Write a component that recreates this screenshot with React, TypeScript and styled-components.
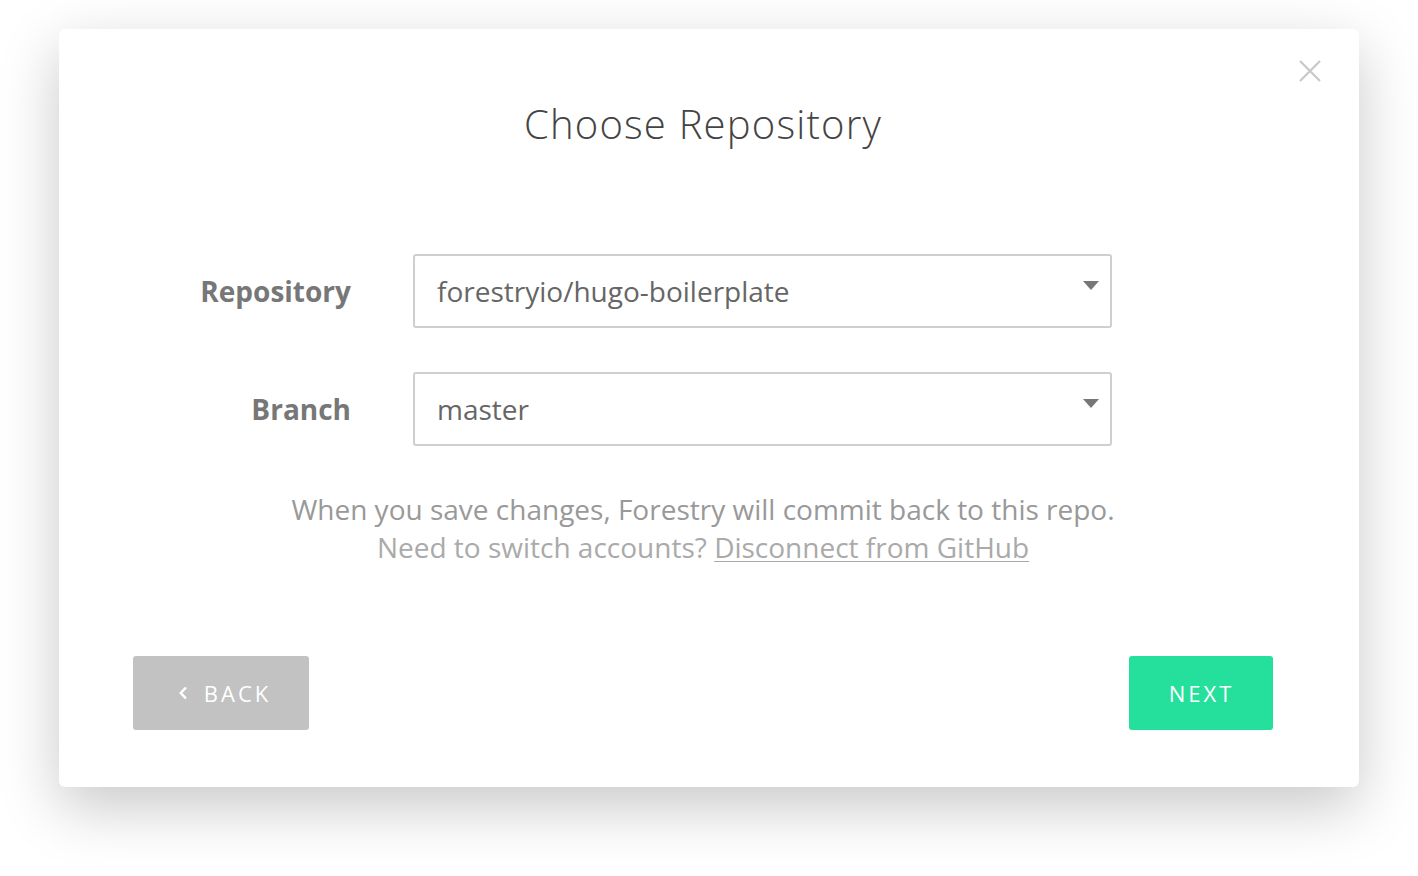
import React from "react";
import styled, { createGlobalStyle } from "styled-components";

const Global = createGlobalStyle`
  html, body { margin: 0; padding: 0; background: #fff; }
  body { font-family: "Open Sans", "Liberation Sans", sans-serif; }
  * { box-sizing: border-box; }
`;

const Page = styled.div`
  width: 1418px;
  height: 876px;
  padding: 29px 0 0 59px;
  overflow: hidden;
`;

const Modal = styled.div`
  position: relative;
  width: 1300px;
  height: 758px;
  background: #fff;
  border-radius: 6px;
  box-shadow: 0 20px 60px rgba(0, 0, 0, 0.22);
  padding: 72px 86px 57px 74px;
  display: flex;
  flex-direction: column;
`;

const Close = styled.button`
  position: absolute;
  top: 29px;
  right: 36px;
  width: 26px;
  height: 26px;
  padding: 0;
  border: 0;
  background: none;
  cursor: pointer;
  display: flex;
  align-items: center;
  justify-content: center;
`;

const Title = styled.h1`
  margin: 0;
  text-align: center;
  font-family: "Open Sans", sans-serif;
  font-weight: 300;
  font-size: 40px;
  line-height: 46px;
  letter-spacing: 1.2px;
  color: #444;
`;

const Form = styled.div`
  margin-top: 107px;
  display: grid;
  grid-template-columns: 218px 699px;
  column-gap: 62px;
  row-gap: 44px;
  align-items: center;
`;

const Label = styled.label`
  text-align: right;
  font-weight: 700;
  font-size: 28px;
  color: #777;
`;

const SelectBox = styled.div`
  position: relative;
  height: 74px;
  border: 2px solid #cfcfcf;
  border-radius: 3px;
  display: flex;
  align-items: center;
  padding: 0 22px;
  font-size: 28px;
  color: #666;
`;

const Caret = styled.span`
  position: absolute;
  right: 11px;
  top: 25px;
  width: 0;
  height: 0;
  border-left: 8px solid transparent;
  border-right: 8px solid transparent;
  border-top: 9px solid #777;
`;

const Help = styled.div`
  margin-top: 44px;
  text-align: center;
  font-size: 28px;
  line-height: 38px;
  color: #999;
`;

const HelpLine = styled.div<{ $light?: boolean }>`
  color: ${(p) => (p.$light ? "#aaa" : "#999")};
`;

const Link = styled.a`
  color: #aaa;
  text-decoration: underline;
  text-underline-offset: 3px;
  text-decoration-thickness: 1px;
`;

const Footer = styled.div`
  margin-top: auto;
  display: flex;
  justify-content: space-between;
`;

const Button = styled.button<{ $variant: "back" | "next" }>`
  height: 74px;
  border: 0;
  border-radius: 3px;
  background: ${(p) => (p.$variant === "back" ? "#c2c2c2" : "#25e09c")};
  color: #fff;
  font-family: "Open Sans", sans-serif;
  font-size: 22px;
  letter-spacing: 3px;
  width: ${(p) => (p.$variant === "back" ? "176px" : "144px")};
  display: flex;
  align-items: center;
  justify-content: center;
  gap: 17px;
  padding: 0 0 0 ${(p) => (p.$variant === "back" ? "8px" : "1px")};
  cursor: pointer;
`;

export default function App() {
  return (
    <>
      <Global />
      <Page>
        <Modal>
          <Close aria-label="Close">
            <svg width="24" height="24" viewBox="0 0 24 24">
              <path d="M2 2 L22 22 M22 2 L2 22" stroke="#c8c8c8" strokeWidth="2.2" />
            </svg>
          </Close>
          <Title>Choose Repository</Title>
          <Form>
            <Label>Repository</Label>
            <SelectBox>
              forestryio/hugo-boilerplate
              <Caret />
            </SelectBox>
            <Label>Branch</Label>
            <SelectBox>
              master
              <Caret />
            </SelectBox>
          </Form>
          <Help>
            <HelpLine>When you save changes, Forestry will commit back to this repo.</HelpLine>
            <HelpLine $light>
              Need to switch accounts? <Link>Disconnect from GitHub</Link>
            </HelpLine>
          </Help>
          <Footer>
            <Button $variant="back">
              <svg width="8" height="14" viewBox="0 0 8 14">
                <path d="M7 1.5 L1.8 7 L7 12.5" stroke="#fff" strokeWidth="2.5" fill="none" />
              </svg>
              BACK
            </Button>
            <Button $variant="next">NEXT</Button>
          </Footer>
        </Modal>
      </Page>
    </>
  );
}
